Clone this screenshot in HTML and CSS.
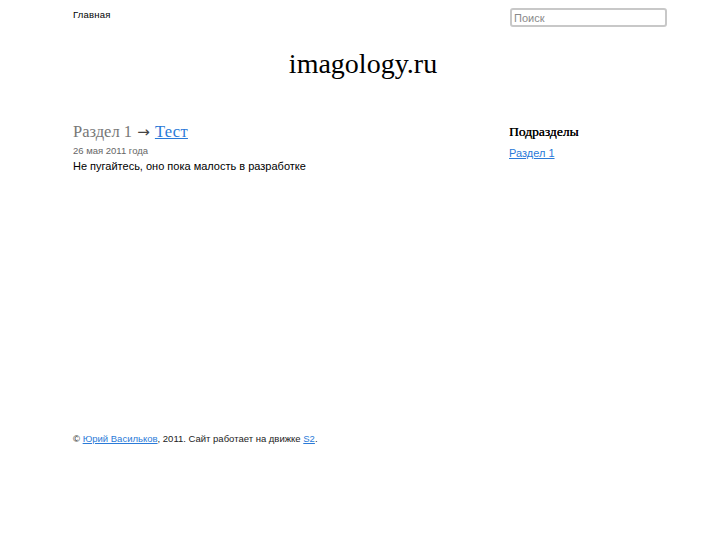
FILE: index.html
```html
<!DOCTYPE html>
<html lang="ru">
<head>
<meta charset="utf-8">
<title>imagology.ru</title>
<link rel="stylesheet" href="styles.css">
</head>
<body>
<div class="page">
  <div class="top">
    <div class="menu">Главная</div>
    <input class="search" type="text" placeholder="Поиск">
  </div>
  <div class="logo">imagology.ru</div>
  <div class="main">
    <div class="content">
      <h1 class="title">Раздел 1 <span class="arrow">→</span> <a href="#">Тест</a></h1>
      <div class="date">26 мая 2011 года</div>
      <p class="text">Не пугайтесь, оно пока малость в разработке</p>
    </div>
    <div class="side">
      <h2 class="side-title">Подразделы</h2>
      <a class="side-link" href="#">Раздел 1</a>
    </div>
  </div>
  <div class="footer">© <a href="#">Юрий Васильков</a>, 2011. Сайт работает на движке <a href="#">S2</a>.</div>
</div>
</body>
</html>
```
FILE: styles.css
```css
html, body { margin: 0; padding: 0; background: #fff; }
body { font-family: "Liberation Sans", Arial, sans-serif; font-size: 11px; color: #000; }
.page { width: 594px; margin: 0 0 0 73px; }
.top { display: flex; justify-content: space-between; align-items: flex-start; height: 40px; }
.menu { padding-top: 9px; font-size: 9.5px; letter-spacing: 0.02em; }
.search {
  margin-top: 8px; width: 157px; height: 19px; box-sizing: border-box;
  border: 2px solid #c8c8c8; border-radius: 3px; padding: 1px 2px;
  font-family: "Liberation Sans", Arial, sans-serif; font-size: 11px; color: #888;
}
.search::placeholder { color: #8a8a8a; }
.logo { text-align: center; font-family: "Liberation Serif", "Times New Roman", serif; font-size: 28px; height: 80px; padding-right: 14px; line-height: 48px; }
.main { display: flex; justify-content: space-between; height: 312px; padding-top: 1px; }
.content { width: 400px; }
.title { margin: 0; font-family: "Liberation Serif", "Times New Roman", serif; font-weight: normal; font-size: 16.5px; color: #777; line-height: 22px; }
.title .arrow { font-family: "DejaVu Sans", sans-serif; font-size: 15px; line-height: 1; color: #444; margin: 0 1px; }
.title a { color: #2a7ad8; letter-spacing: 0.02em; }
.date { font-size: 9.5px; color: #666; margin-top: 2px; }
.text { margin: 4px 0 0; font-size: 11px; }
.side { width: 158px; }
.side-title { margin: 0; font-family: "Liberation Serif", "Times New Roman", serif; font-size: 13.5px; font-weight: normal; line-height: 22px; text-shadow: 0.3px 0 0 #000; }
.side-link { display: block; margin-top: 4px; color: #2a7ad8; font-size: 11px; }
.footer { font-size: 9.5px; color: #222; }
.footer a { color: #2a7ad8; }
```
